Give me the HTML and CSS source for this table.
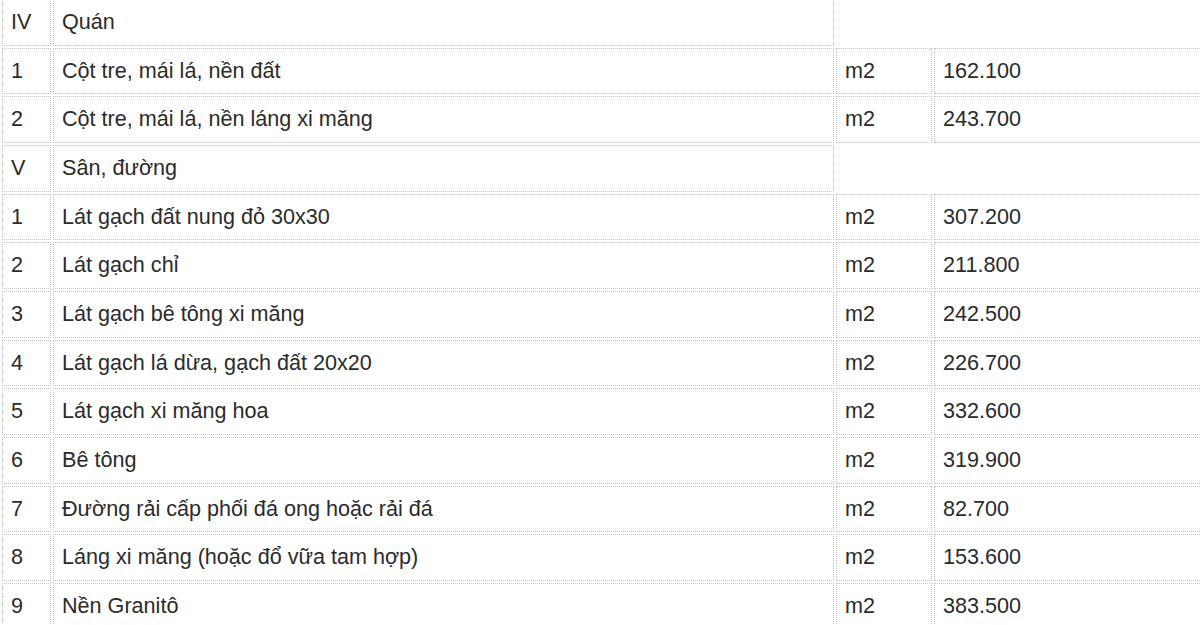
FILE: index.html
```html
<!DOCTYPE html>
<html lang="vi">
<head>
  <meta charset="UTF-8">
  <title>Bảng giá</title>
  <link rel="stylesheet" href="styles.css">
</head>
<body>
  <table class="price">
    <colgroup>
      <col class="c-no">
      <col class="c-name">
      <col class="c-unit">
      <col class="c-price">
    </colgroup>
    <tbody>
      <tr><td>IV</td><td>Quán</td></tr>
      <tr><td>1</td><td>Cột tre, mái lá, nền đất</td><td>m2</td><td>162.100</td></tr>
      <tr><td>2</td><td>Cột tre, mái lá, nền láng xi măng</td><td>m2</td><td>243.700</td></tr>
      <tr><td>V</td><td>Sân, đường</td></tr>
      <tr><td>1</td><td>Lát gạch đất nung đỏ 30x30</td><td>m2</td><td>307.200</td></tr>
      <tr><td>2</td><td>Lát gạch chỉ</td><td>m2</td><td>211.800</td></tr>
      <tr><td>3</td><td>Lát gạch bê tông xi măng</td><td>m2</td><td>242.500</td></tr>
      <tr><td>4</td><td>Lát gạch lá dừa, gạch đất 20x20</td><td>m2</td><td>226.700</td></tr>
      <tr><td>5</td><td>Lát gạch xi măng hoa</td><td>m2</td><td>332.600</td></tr>
      <tr><td>6</td><td>Bê tông</td><td>m2</td><td>319.900</td></tr>
      <tr><td>7</td><td>Đường rải cấp phối đá ong hoặc rải đá</td><td>m2</td><td>82.700</td></tr>
      <tr><td>8</td><td>Láng xi măng (hoặc đổ vữa tam hợp)</td><td>m2</td><td>153.600</td></tr>
      <tr><td>9</td><td>Nền Granitô</td><td>m2</td><td>383.500</td></tr>
    </tbody>
  </table>
</body>
</html>
```

FILE: styles.css
```css
* {
  box-sizing: border-box;
}

body {
  margin: 0;
  background: #fff;
  font-family: "Liberation Sans", Arial, sans-serif;
  font-size: 21.6px;
  color: #2b2b2b;
  overflow: hidden;
}

.price {
  border-collapse: separate;
  border-spacing: 2px;
  table-layout: fixed;
  width: 1300px;
  margin-top: -3px;
}

.c-no { width: 49px; }
.c-name { width: 781px; }
.c-unit { width: 96px; }
.c-price { width: 366px; }

.price td {
  border: 1px dotted #c4c4c4;
  padding: 8px 8px;
  line-height: 28.67px;
  vertical-align: top;
  white-space: nowrap;
}
```
